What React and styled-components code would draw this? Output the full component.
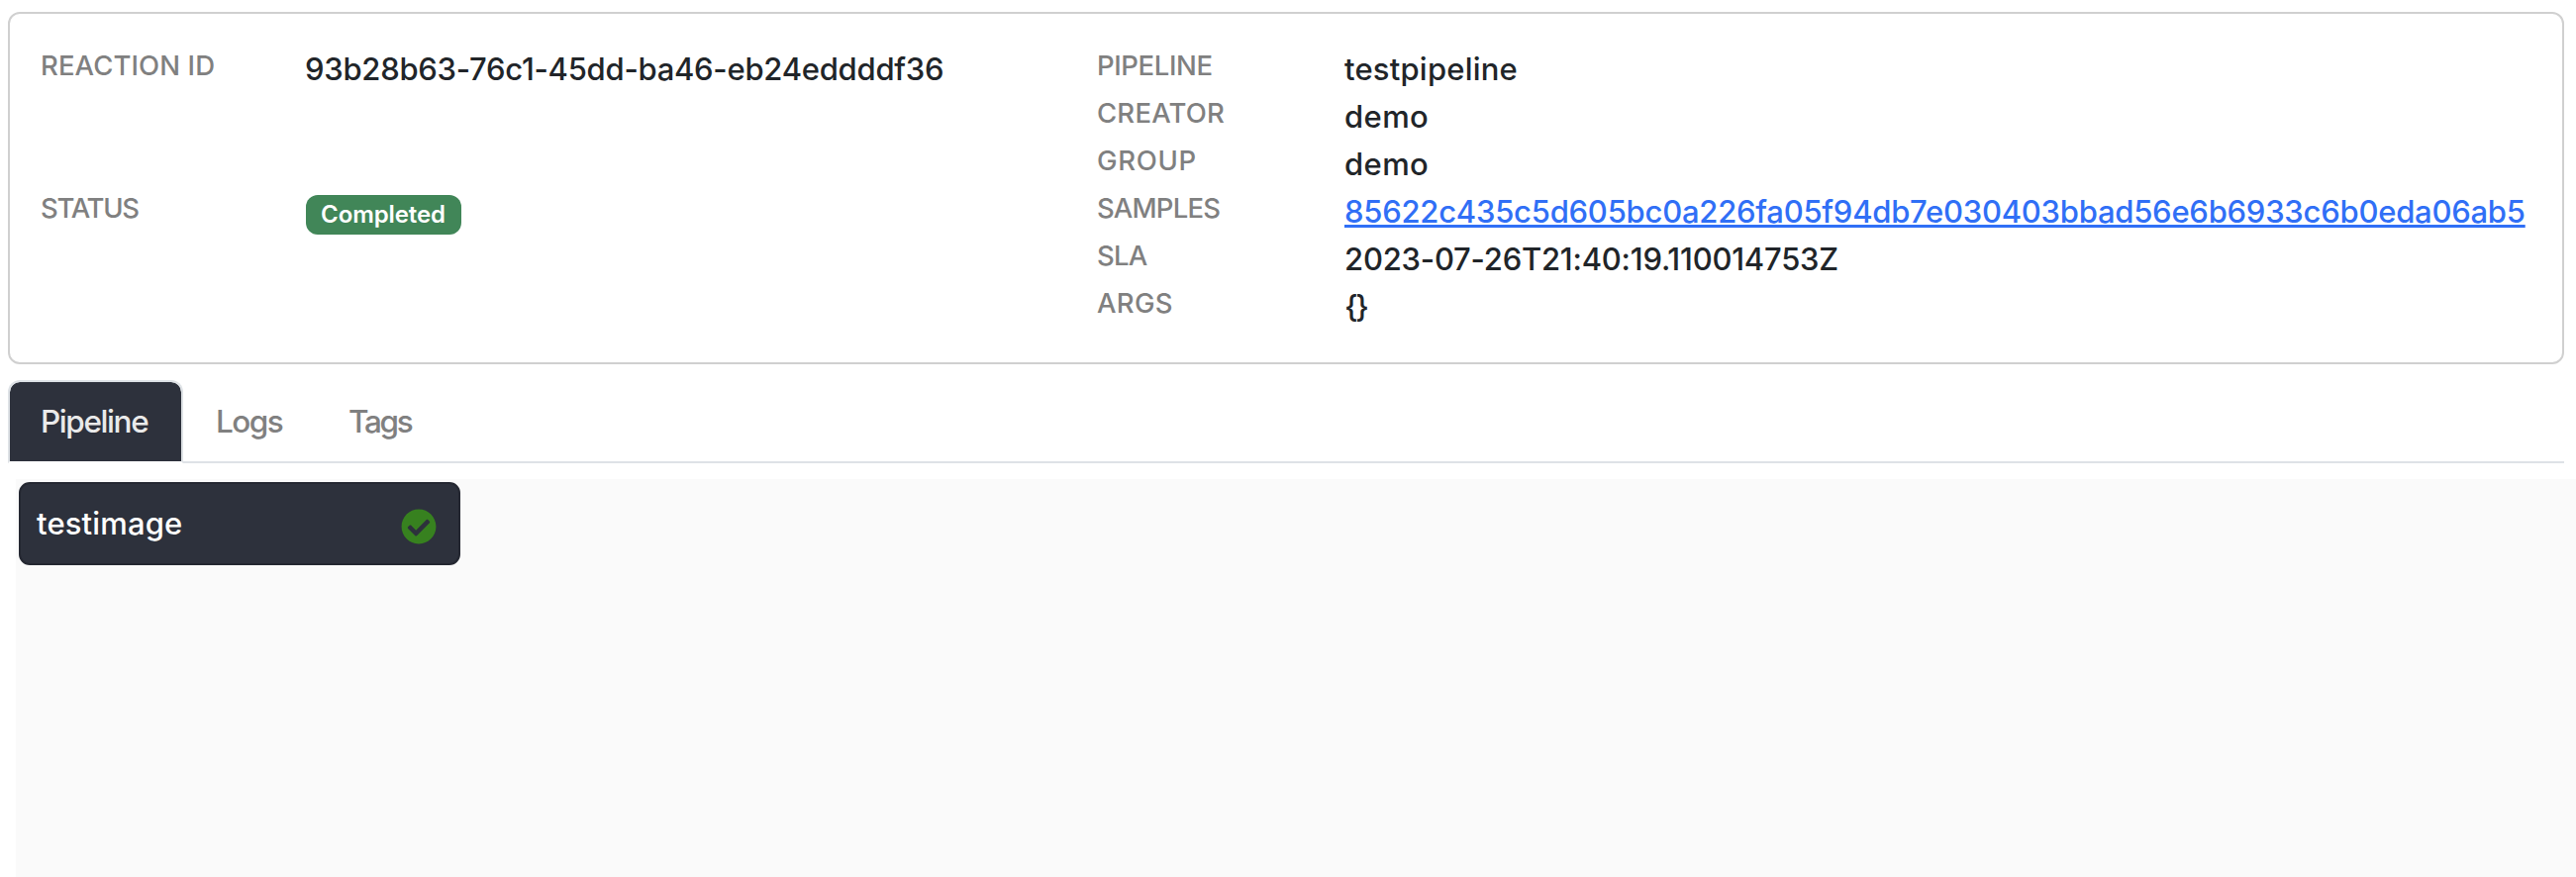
import React from "react";
import styled, { createGlobalStyle } from "styled-components";
import { FaCheckCircle } from "react-icons/fa";

const GlobalStyle = createGlobalStyle`
  *, *::before, *::after { box-sizing: border-box; }
  body {
    margin: 0;
    background: #ffffff;
    color: #212529;
    font-family: Inter, "Liberation Sans", sans-serif;
    font-weight: 450;
    overflow: hidden;
  }
`;

const Page = styled.main`
  display: flex;
  flex-direction: column;
  height: 886px;
  padding-top: 12px;
`;

const SummaryCard = styled.section`
  display: grid;
  grid-template-columns: 1067px 1fr;
  height: 356px;
  margin: 0 12px 0 8px;
  padding: 32px 32px 30px;
  border: 2px solid #d0d0d0;
  border-radius: 12px;
`;

const Fields = styled.dl`
  display: grid;
  grid-template-columns: ${(p) => p.$labelWidth}px 1fr;
  grid-auto-rows: ${(p) => p.$rowHeight}px;
  margin: 0;
`;

const Label = styled.dt`
  color: #808080;
  font-size: 27.5px;
  line-height: 40px;
  letter-spacing: ${(p) => p.$tracking}px;
  text-indent: -1px;
  white-space: nowrap;
`;

const Value = styled.dd`
  margin: 0;
  font-size: 31px;
  line-height: 48px;
  letter-spacing: ${(p) => p.$tracking}px;
  text-indent: -1px;
  white-space: nowrap;
`;

const SampleLink = styled.a`
  color: #306ff6;
  text-decoration: underline;
  text-decoration-thickness: 3px;
  text-underline-offset: 2px;
  text-decoration-skip-ink: none;
`;

const StatusBadge = styled.span`
  display: flex;
  align-items: center;
  justify-content: center;
  width: 157px;
  height: 40px;
  margin-top: 7px;
  border-radius: 12px;
  background: #418658;
  color: #ffffff;
  font-size: 24px;
  font-weight: 600;
  line-height: 40px;
  letter-spacing: -0.1px;
`;

const TabBar = styled.nav`
  display: flex;
  height: 84px;
  margin: 16px 12px 0 8px;
  border-bottom: 2px solid #dee2e6;
`;

const Tab = styled.button`
  height: 84px;
  width: ${(p) => p.$width}px;
  padding: 0 0 0 31px;
  border: 2px solid ${(p) => (p.$active ? "#dee2e6" : "transparent")};
  border-bottom-color: ${(p) => (p.$active ? "#ffffff" : "transparent")};
  border-radius: 12px 12px 0 0;
  background: ${(p) => (p.$active ? "#2d313c" : "transparent")};
  background-clip: padding-box;
  color: ${(p) => (p.$active ? "#eaeaea" : "#808080")};
  font: inherit;
  font-size: 31.5px;
  font-weight: ${(p) => (p.$active ? 500 : 450)};
  line-height: 80px;
  letter-spacing: ${(p) => p.$tracking}px;
  text-align: left;
  white-space: nowrap;
`;

const StageArea = styled.section`
  flex: 1;
  margin: 16px 0 0 16px;
  padding: 3px;
  background: #fafafa;
`;

const StageNode = styled.article`
  display: flex;
  align-items: center;
  justify-content: space-between;
  width: 446px;
  height: 84px;
  padding: 0 22px 0 16px;
  border: 2px solid #242731;
  border-radius: 11px;
  background: #2d313c;
  color: #ffffff;
`;

const StageName = styled.span`
  font-size: 31px;
  font-weight: 550;
  line-height: 38px;
  letter-spacing: 0.15px;
`;

const DoneIcon = styled(FaCheckCircle)`
  width: 36px;
  height: 36px;
  margin-top: 6px;
  color: #37811f;
`;

const details = [
  { label: "PIPELINE", labelTracking: -0.4, value: "testpipeline", tracking: 0.2 },
  { label: "CREATOR", labelTracking: 0.2, value: "demo", tracking: 0.4 },
  { label: "GROUP", labelTracking: 0.7, value: "demo", tracking: 0.4 },
  {
    label: "SAMPLES",
    labelTracking: -0.8,
    value: "85622c435c5d605bc0a226fa05f94db7e030403bbad56e6b6933c6b0eda06ab5",
    tracking: -0.24,
    link: true,
  },
  { label: "SLA", labelTracking: -0.8, value: "2023-07-26T21:40:19.110014753Z", tracking: -0.22 },
  { label: "ARGS", labelTracking: 0.3, value: "{}", tracking: -2.5 },
];

const tabs = [
  { name: "Pipeline", width: 177, tracking: -1.4, active: true },
  { name: "Logs", width: 134, tracking: -1.5 },
  { name: "Tags", width: 132, tracking: -2.3 },
];

export default function App() {
  return (
    <>
      <GlobalStyle />
      <Page>
        <SummaryCard>
          <Fields $labelWidth={267} $rowHeight={144}>
            <Label $tracking={0.1}>REACTION ID</Label>
            <Value $tracking={-0.26}>93b28b63-76c1-45dd-ba46-eb24eddddf36</Value>
            <Label $tracking={-1.3}>STATUS</Label>
            <Value $tracking={0}>
              <StatusBadge>Completed</StatusBadge>
            </Value>
          </Fields>
          <Fields $labelWidth={250} $rowHeight={48}>
            {details.map((d) => (
              <React.Fragment key={d.label}>
                <Label $tracking={d.labelTracking}>{d.label}</Label>
                <Value $tracking={d.tracking}>
                  {d.link ? <SampleLink>{d.value}</SampleLink> : d.value}
                </Value>
              </React.Fragment>
            ))}
          </Fields>
        </SummaryCard>
        <TabBar>
          {tabs.map((t) => (
            <Tab key={t.name} $width={t.width} $tracking={t.tracking} $active={t.active}>
              {t.name}
            </Tab>
          ))}
        </TabBar>
        <StageArea>
          <StageNode>
            <StageName>testimage</StageName>
            <DoneIcon />
          </StageNode>
        </StageArea>
      </Page>
    </>
  );
}
